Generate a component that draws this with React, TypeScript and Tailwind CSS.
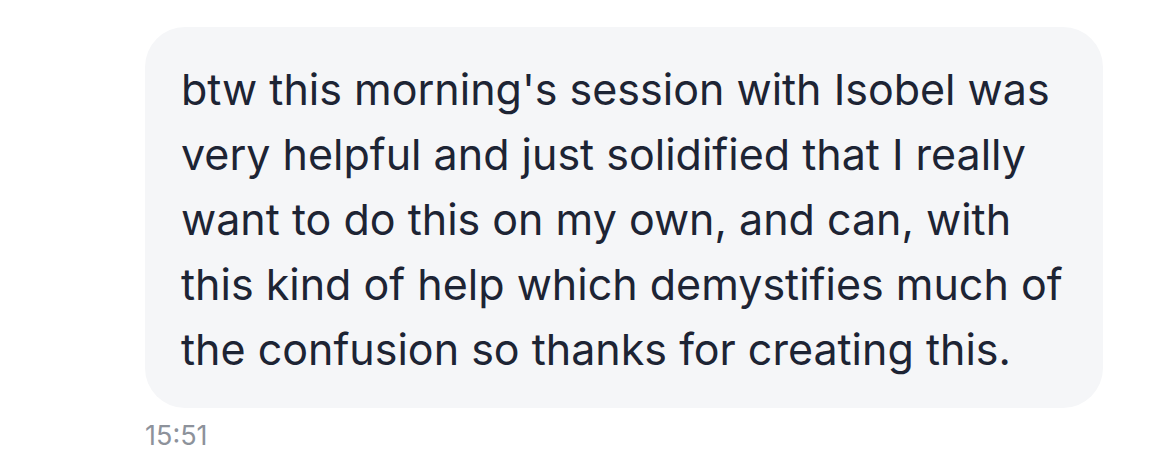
import React from 'react';

const message =
  "btw this morning's session with Isobel was very helpful and just solidified that I really want to do this on my own, and can, with this kind of help which demystifies much of the confusion so thanks for creating this.";

export default function App() {
  return (
    <div className="w-[1151px] h-[476px] bg-white pl-[145px] pt-[27px] font-['Inter',sans-serif]">
      <div className="w-[958px] rounded-[40px] bg-[#f5f6f8] pl-[36px] pr-[30px] pt-[30px] pb-[26px]">
        <p className="text-[43px] leading-[65px] text-[#1d2434]">{message}</p>
      </div>
      <div className="mt-[13px] text-[27px] leading-[30px] text-[#8d929b]">15:51</div>
    </div>
  );
}
